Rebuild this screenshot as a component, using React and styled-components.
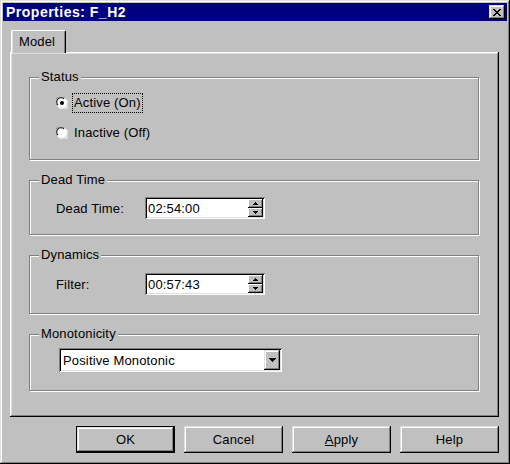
import styled, { createGlobalStyle } from "styled-components";

const GlobalStyle = createGlobalStyle`
  body {
    margin: 0;
    background: #c0c0c0;
    font-family: "Liberation Sans", Arial, sans-serif;
    font-size: 13px;
    letter-spacing: 0.15px;
    color: #000;
  }
  * { box-sizing: border-box; }
`;

const raised = `
  box-shadow: inset -1px -1px #000, inset 1px 1px #dfdfdf,
    inset -2px -2px #808080, inset 2px 2px #fff;
`;

const sunken = `
  box-shadow: inset 1px 1px #808080, inset -1px -1px #fff,
    inset 2px 2px #000, inset -2px -2px #dfdfdf;
`;

const Window = styled.div`
  width: 510px;
  height: 464px;
  padding: 3px;
  background: #c0c0c0;
  display: flex;
  flex-direction: column;
  box-shadow: inset -1px -1px #000, inset 1px 1px #dfdfdf,
    inset -2px -2px #808080, inset 2px 2px #fff;
`;

const TitleBar = styled.div`
  height: 18px;
  background: #000080;
  display: flex;
  align-items: center;
  justify-content: space-between;
  padding: 0 2px 0 3px;
`;

const Title = styled.span`
  color: #fff;
  font-weight: bold;
  font-size: 14px;
  letter-spacing: 0.5px;
`;

const CloseButton = styled.div`
  width: 16px;
  height: 14px;
  background: #c0c0c0;
  display: flex;
  align-items: center;
  justify-content: center;
  ${raised}
`;

const Body = styled.div`
  padding: 9px 9px 0 7px;
`;

const TabStrip = styled.div`
  display: flex;
  padding-left: 1px;
`;

const Tab = styled.div`
  position: relative;
  z-index: 1;
  height: 23px;
  margin-bottom: -1px;
  padding: 3px 10px 0 7px;
  background: #c0c0c0;
  border-top: 1px solid #fff;
  border-left: 1px solid #fff;
  border-right: 1px solid #000;
  border-top-left-radius: 2px;
  border-top-right-radius: 2px;
  box-shadow: inset -1px 0 #808080, inset 1px 0 #dfdfdf;
`;

const Panel = styled.div`
  width: 489px;
  height: 365px;
  padding: 25px 0 0 19px;
  display: flex;
  flex-direction: column;
  gap: 20px;
  box-shadow: inset -1px -1px #000, inset 1px 1px #fff,
    inset -2px -2px #808080, inset 2px 2px #dfdfdf;
`;

const Group = styled.div`
  position: relative;
  width: 450px;
  height: ${(p) => p.$h}px;
  border: 1px solid #808080;
  box-shadow: inset 1px 1px #fff, 1px 1px #fff;
`;

const Legend = styled.span`
  position: absolute;
  top: -9px;
  left: 9px;
  padding: 0 2px;
  line-height: 16px;
  background: #c0c0c0;
`;

const RadioList = styled.div`
  display: flex;
  flex-direction: column;
  gap: 10px;
  padding: 15px 0 0 26px;
`;

const RadioRow = styled.label`
  display: flex;
  align-items: center;
  gap: 4px;
  height: 20px;
`;

const RadioText = styled.span`
  padding: 1px 1px 2px;
  border: 1px dotted ${(p) => (p.$focus ? "#000" : "transparent")};
`;

const FieldRow = styled.div`
  display: flex;
  align-items: center;
  padding: ${(p) => p.$top}px 0 0 26px;
`;

const FieldLabel = styled.span`
  width: 89px;
`;

const Field = styled.div`
  width: 120px;
  height: 22px;
  padding: 2px;
  background: #fff;
  display: flex;
  align-items: center;
  ${sunken}
`;

const FieldText = styled.span`
  flex: 1;
  padding-left: 1px;
`;

const Spin = styled.div`
  display: flex;
  flex-direction: column;
  width: 15px;
  height: 18px;
`;

const SpinButton = styled.div`
  flex: 1;
  background: #c0c0c0;
  display: flex;
  align-items: center;
  justify-content: center;
  box-shadow: inset -1px -1px #000, inset 1px 1px #fff,
    inset -2px -2px #808080;
`;

const SelectRow = styled.div`
  padding: 13px 0 0 29px;
`;

const Select = styled.div`
  width: 223px;
  height: 24px;
  padding: 2px;
  background: #fff;
  display: flex;
  align-items: center;
  ${sunken}
`;

const SelectText = styled.span`
  flex: 1;
  padding-left: 2px;
`;

const DropButton = styled.div`
  width: 16px;
  height: 20px;
  background: #c0c0c0;
  display: flex;
  align-items: center;
  justify-content: center;
  ${raised}
`;

const ButtonRow = styled.div`
  display: flex;
  justify-content: flex-end;
  gap: 9px;
  width: 489px;
  padding-top: 9px;
`;

const Button = styled.div`
  width: 99px;
  height: 27px;
  display: flex;
  align-items: center;
  justify-content: center;
  background: #c0c0c0;
  border: ${(p) => (p.$default ? "1px solid #000" : "none")};
  ${raised}
`;

const Arrow = ({ up, w = 5 }) => (
  <svg width={w} height={Math.ceil(w / 2)} viewBox={`0 0 ${w} ${Math.ceil(w / 2)}`}>
    <polygon
      points={
        up
          ? `0,${Math.ceil(w / 2)} ${w},${Math.ceil(w / 2)} ${w / 2},0`
          : `0,0 ${w},0 ${w / 2},${Math.ceil(w / 2)}`
      }
      fill="#000"
      shapeRendering="crispEdges"
    />
  </svg>
);

const Radio = ({ checked }) => (
  <svg width="12" height="12" viewBox="0 0 12 12">
    <circle cx="6" cy="6" r="5.5" fill="#fff" />
    <path d="M1 8.5 A5.2 5.2 0 0 1 8.5 1" stroke="#808080" strokeWidth="1" fill="none" />
    <path d="M2 8 A4.2 4.2 0 0 1 8 2" stroke="#000" strokeWidth="1" fill="none" />
    <path d="M11 3.5 A5.2 5.2 0 0 1 3.5 11" stroke="#fff" strokeWidth="1" fill="none" />
    <path d="M10 4 A4.2 4.2 0 0 1 4 10" stroke="#dfdfdf" strokeWidth="1" fill="none" />
    {checked && <circle cx="6" cy="6" r="2" fill="#000" />}
  </svg>
);

const CloseIcon = () => (
  <svg width="8" height="7" viewBox="0 0 8 7" shapeRendering="crispEdges">
    <path
      d="M0 0h2v1h1v1h2v-1h1v-1h2v1h-1v1h-1v1h-1v1h1v1h1v1h1v1h-2v-1h-1v-1h-2v1h-1v1h-2v-1h1v-1h1v-1h1v-1h-1v-1h-1v-1h-1z"
      fill="#000"
    />
  </svg>
);

const SpinField = ({ value }) => (
  <Field>
    <FieldText>{value}</FieldText>
    <Spin>
      <SpinButton>
        <Arrow up />
      </SpinButton>
      <SpinButton>
        <Arrow />
      </SpinButton>
    </Spin>
  </Field>
);

export default function App() {
  return (
    <>
      <GlobalStyle />
      <Window>
        <TitleBar>
          <Title>Properties: F_H2</Title>
          <CloseButton>
            <CloseIcon />
          </CloseButton>
        </TitleBar>
        <Body>
          <TabStrip>
            <Tab>Model</Tab>
          </TabStrip>
          <Panel>
            <Group $h={83}>
              <Legend>Status</Legend>
              <RadioList>
                <RadioRow>
                  <Radio checked />
                  <RadioText $focus>Active (On)</RadioText>
                </RadioRow>
                <RadioRow>
                  <Radio />
                  <RadioText>Inactive (Off)</RadioText>
                </RadioRow>
              </RadioList>
            </Group>
            <Group $h={55}>
              <Legend>Dead Time</Legend>
              <FieldRow $top={16}>
                <FieldLabel>Dead Time:</FieldLabel>
                <SpinField value="02:54:00" />
              </FieldRow>
            </Group>
            <Group $h={59}>
              <Legend>Dynamics</Legend>
              <FieldRow $top={17}>
                <FieldLabel>Filter:</FieldLabel>
                <SpinField value="00:57:43" />
              </FieldRow>
            </Group>
            <Group $h={57}>
              <Legend>Monotonicity</Legend>
              <SelectRow>
                <Select>
                  <SelectText>Positive Monotonic</SelectText>
                  <DropButton>
                    <Arrow w={7} />
                  </DropButton>
                </Select>
              </SelectRow>
            </Group>
          </Panel>
          <ButtonRow>
            <Button $default>OK</Button>
            <Button>Cancel</Button>
            <Button>
              <span>
                <u>A</u>pply
              </span>
            </Button>
            <Button>Help</Button>
          </ButtonRow>
        </Body>
      </Window>
    </>
  );
}
